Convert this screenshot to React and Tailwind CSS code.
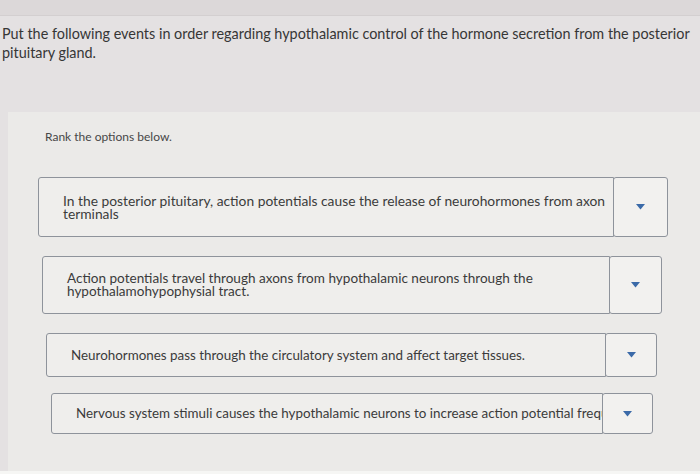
import React from 'react';

const items = [
  {
    text: 'In the posterior pituitary, action potentials cause the release of neurohormones from axon terminals',
    box: 'ml-[30px] w-[630px] h-[60px] mt-[33px]',
    drop: 'w-[55px]',
    pad: 'pr-[1px] text-[13.8px]',
  },
  {
    text: 'Action potentials travel through axons from hypothalamic neurons through the hypothalamohypophysial tract.',
    box: 'ml-[34px] w-[620px] h-[58px] mt-[19px]',
    drop: 'w-[53px]',
    pad: 'pr-[60px] text-[13.55px]',
  },
  {
    text: 'Neurohormones pass through the circulatory system and affect target tissues.',
    box: 'ml-[38px] w-[611px] h-[44px] mt-[19px]',
    drop: 'w-[52px]',
    pad: 'pr-[6px] text-[13.4px]',
  },
  {
    text: 'Nervous system stimuli causes the hypothalamic neurons to increase action potential frequency.',
    box: 'ml-[43px] w-[602px] h-[41px] mt-[16px]',
    drop: 'w-[51px]',
    pad: 'whitespace-nowrap text-[13.4px]',
  },
];

function RankRow({ text, box, drop, pad }) {
  return (
    <div className={`flex ${box}`}>
      <div className="flex-1 min-w-0 flex items-center overflow-hidden border border-[#8e939b] rounded-l-[3px] bg-[#efeeec] pl-[24px]">
        <p className={`leading-[13px] text-[#3b3b3b] ${pad}`}>{text}</p>
      </div>
      <div className={`${drop} -ml-px flex items-center justify-center border border-[#8e939b] rounded-[3px] bg-[#f2f1ef]`}>
        <svg width="9" height="6" viewBox="0 0 9 6">
          <path d="M0 0 L9 0 L4.5 5.5 Z" fill="#3b6aa8" />
        </svg>
      </div>
    </div>
  );
}

export default function App() {
  return (
    <div className="w-[700px] h-[474px] overflow-hidden bg-[#e4e1e2] flex flex-col" style={{ fontFamily: 'Lato, "Open Sans", sans-serif' }}>
      <div className="h-[16px] bg-[#dcd8d9] border-b border-[#d3cfd0]" />
      <div className="pl-[2px] pt-[8px] text-[14.4px] leading-[19px] text-[#363636]">
        Put the following events in order regarding hypothalamic control of the hormone secretion from the posterior
        pituitary gland.
      </div>
      <div className="ml-[8px] mt-[50px] flex-1 bg-[#ebeae8] pt-[18px]">
        <p className="pl-[37px] text-[12px] leading-[14px] text-[#474747]">Rank the options below.</p>
        {items.map((it, i) => (
          <RankRow key={i} {...it} />
        ))}
      </div>
      <div className="h-[3px] bg-[#f6f6f4]" />
    </div>
  );
}
